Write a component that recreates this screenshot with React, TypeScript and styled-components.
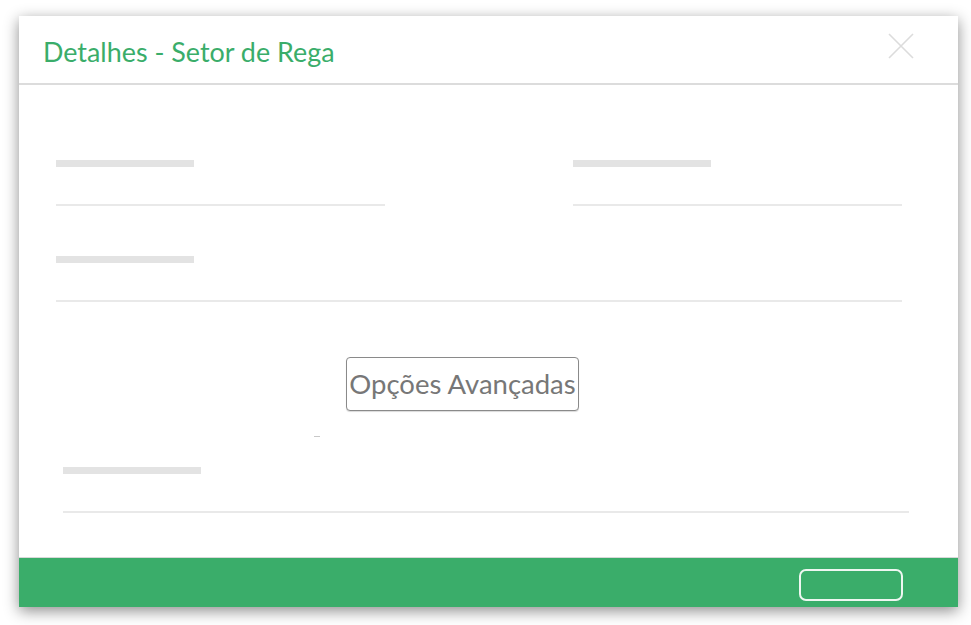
import React from "react";
import styled, { createGlobalStyle } from "styled-components";

const GlobalStyle = createGlobalStyle`
  html, body {
    margin: 0;
    padding: 0;
    background: #ffffff;
    font-family: "Lato", "Open Sans", sans-serif;
  }
`;

const Page = styled.div`
  width: 971px;
  height: 625px;
  padding: 16px 0 0 19px;
  box-sizing: border-box;
`;

const Modal = styled.div`
  width: 939px;
  height: 591px;
  background: #ffffff;
  box-shadow: 0 4px 14px rgba(0, 0, 0, 0.45);
  display: flex;
  flex-direction: column;
`;

const Header = styled.header`
  flex-shrink: 0;
  height: 67px;
  border-bottom: 2px solid #dcdcdc;
  display: flex;
  align-items: center;
  justify-content: space-between;
  padding: 0 44px 0 24px;
`;

const Title = styled.h4`
  margin: 4px 0 0;
  font-size: 26.9px;
  font-weight: 400;
  color: #3aad6a;
`;

const Close = styled.button`
  border: none;
  background: none;
  padding: 0;
  width: 26px;
  height: 26px;
  margin-top: -8px;
  cursor: pointer;
`;

const Body = styled.div`
  flex: 1;
  min-height: 0;
  padding: 75px 56px 0 37px;
  display: flex;
  flex-direction: column;
  & > * {
    flex-shrink: 0;
  }
`;

const Row = styled.div<{ $cols?: number; $last?: boolean }>`
  display: grid;
  grid-template-columns: ${(p) => (p.$cols === 2 ? "329px 329px" : "1fr")};
  justify-content: space-between;
  margin-bottom: ${(p) => (p.$last ? 0 : 50)}px;
`;

const Field = styled.div<{ $shift?: number }>`
  display: flex;
  flex-direction: column;
  margin-left: ${(p) => p.$shift || 0}px;
  margin-right: ${(p) => -(p.$shift || 0)}px;
`;

const LabelBar = styled.div`
  width: 138px;
  height: 7px;
  background: #e3e3e3;
  margin-bottom: 37px;
`;

const Underline = styled.div`
  height: 2px;
  background: #e9e9e9;
`;

const AdvancedButton = styled.button`
  align-self: flex-start;
  margin: 5px 0 0 290px;
  width: 233px;
  height: 54px;
  border: 1px solid #8a8a8a;
  border-radius: 4px;
  background: #ffffff;
  color: #777777;
  font-family: "Lato", "Open Sans", sans-serif;
  font-size: 27.5px;
  padding: 0 0 2px;
  white-space: nowrap;
  box-shadow: 0 1px 1px rgba(0, 0, 0, 0.15);
`;

const Dash = styled.div`
  width: 6px;
  height: 1px;
  background: #c8c8c8;
  margin: 25px 0 30px 258px;
`;

const Footer = styled.footer`
  flex-shrink: 0;
  height: 38px;
  border-top: 1px solid #d8d8d8;
  background: #3aad6a;
  display: flex;
  justify-content: flex-end;
  align-items: flex-start;
  padding: 11px 55px 0 0;
`;

const FooterButton = styled.button`
  width: 104px;
  height: 32px;
  border: 2px solid #eef7f1;
  border-radius: 7px;
  background: transparent;
  box-sizing: border-box;
`;

const CloseIcon = () => (
  <svg width="26" height="26" viewBox="0 0 26 26">
    <path d="M1 1 L25 25 M25 1 L1 25" stroke="#dcdcdc" strokeWidth="1.6" />
  </svg>
);

const App: React.FC = () => {
  return (
    <Page>
      <GlobalStyle />
      <Modal>
        <Header>
          <Title>Detalhes - Setor de Rega</Title>
          <Close aria-label="Fechar">
            <CloseIcon />
          </Close>
        </Header>
        <Body>
          <Row $cols={2}>
            <Field>
              <LabelBar />
              <Underline />
            </Field>
            <Field>
              <LabelBar />
              <Underline />
            </Field>
          </Row>
          <Row>
            <Field>
              <LabelBar />
              <Underline />
            </Field>
          </Row>
          <AdvancedButton>Opções Avançadas</AdvancedButton>
          <Dash />
          <Row $last>
            <Field $shift={7}>
              <LabelBar />
              <Underline />
            </Field>
          </Row>
        </Body>
        <Footer>
          <FooterButton />
        </Footer>
      </Modal>
    </Page>
  );
};

export default App;
